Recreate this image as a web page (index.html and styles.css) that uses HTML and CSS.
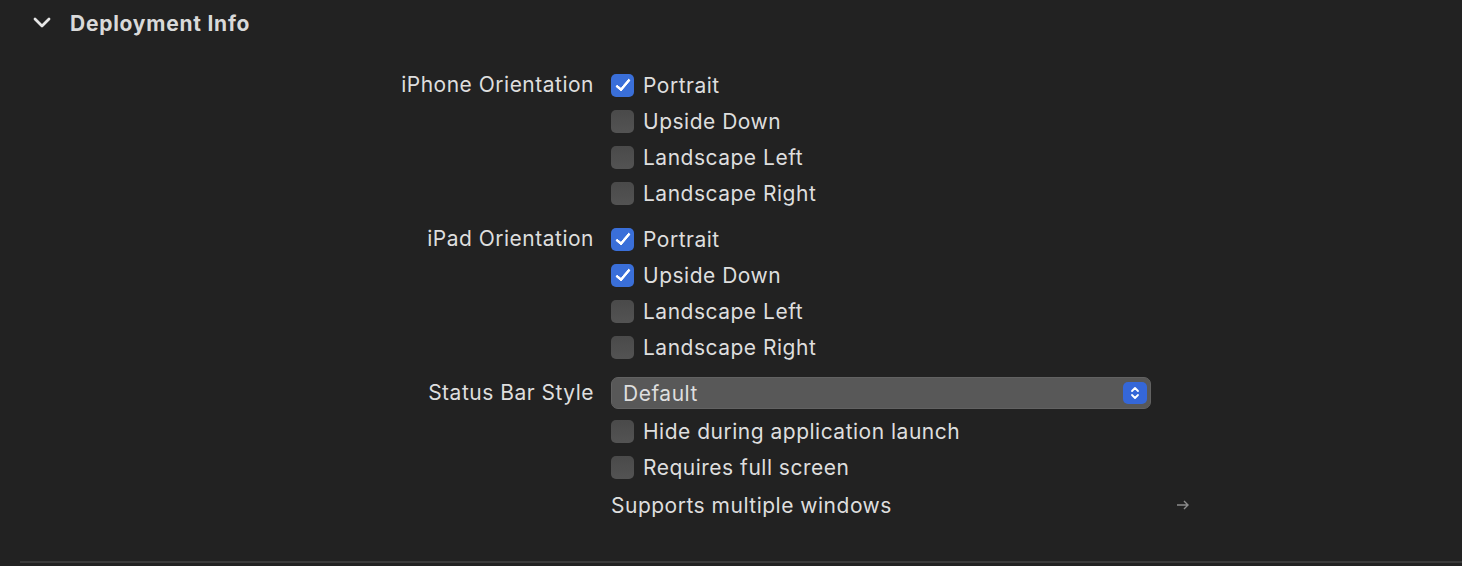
FILE: index.html
```html
<!DOCTYPE html>
<html lang="en">
<head>
  <meta charset="UTF-8">
  <title>Deployment Info</title>
  <link rel="stylesheet" href="styles.css">
</head>
<body>
  <div class="section">
    <div class="header">
      <svg class="chevron" width="18" height="12" viewBox="0 0 18 12"><path d="M2 2 L9 9 L16 2" fill="none" stroke="#e6e6e6" stroke-width="2.8" stroke-linecap="round" stroke-linejoin="round"/></svg>
      <span class="heading">Deployment Info</span>
    </div>

    <div class="group">
      <div class="label">iPhone Orientation</div>
      <div class="controls">
        <div class="row"><span class="box on"></span>Portrait</div>
        <div class="row"><span class="box"></span>Upside Down</div>
        <div class="row"><span class="box"></span>Landscape Left</div>
        <div class="row"><span class="box"></span>Landscape Right</div>
      </div>
    </div>

    <div class="group">
      <div class="label">iPad Orientation</div>
      <div class="controls">
        <div class="row"><span class="box on"></span>Portrait</div>
        <div class="row"><span class="box on"></span>Upside Down</div>
        <div class="row"><span class="box"></span>Landscape Left</div>
        <div class="row"><span class="box"></span>Landscape Right</div>
      </div>
    </div>

    <div class="group">
      <div class="label">Status Bar Style</div>
      <div class="controls">
        <div class="row">
          <div class="popup">
            <span>Default</span>
            <span class="stepper">
              <svg width="12" height="16" viewBox="0 0 12 16"><path d="M3 6 L6 3 L9 6 M3 10 L6 13 L9 10" fill="none" stroke="#fff" stroke-width="1.8" stroke-linecap="round" stroke-linejoin="round"/></svg>
            </span>
          </div>
        </div>
        <div class="row tight"><span class="box"></span>Hide during application launch</div>
        <div class="row"><span class="box"></span>Requires full screen</div>
        <div class="row tight wide">
          <span>Supports multiple windows</span>
          <svg class="arrow" width="14" height="12" viewBox="0 0 14 12"><path d="M1 6 H12 M8 2 L12 6 L8 10" fill="none" stroke="#8c8c8c" stroke-width="1.4"/></svg>
        </div>
      </div>
    </div>
  </div>
  <div class="divider"></div>
</body>
</html>
```

FILE: styles.css
```css
body {
  margin: 0; background: #222222; color: #dedede;
  font-family: Inter, "Noto Sans", sans-serif; font-size: 21px; letter-spacing: 0.5px;
  height: 566px; overflow: hidden; position: relative;
}
.section { height: 561px; }
.header { display: flex; align-items: center; height: 46px; }
.chevron { margin-left: 33px; margin-right: 19px; }
.heading { font-weight: 700; font-size: 21px; color: #d9d9d9; letter-spacing: 0.75px; }

.group { display: flex; margin-top: 10px; }
.header + .group { margin-top: 21px; }
.label { width: 594px; text-align: right; line-height: 36px; height: 36px; }
.controls { margin-left: 17px; }

.row { display: flex; align-items: center; height: 36px; }
.row.tight { margin-top: 2px; }
.row.wide { width: 580px; justify-content: space-between; }

.box {
  width: 23px; height: 23px; border-radius: 5px; margin-right: 9px;
  background: linear-gradient(#4a4a4a, #535353);
  box-sizing: border-box; flex-shrink: 0; position: relative;
}
.box.on { background: #3a6fd9; }
.box.on::after {
  content: ""; position: absolute; left: 8px; top: 2px;
  width: 5px; height: 12px;
  border-right: 3px solid #fff; border-bottom: 3px solid #fff;
  transform: rotate(40deg); border-radius: 1px;
}

.popup {
  width: 540px; height: 32px; box-sizing: border-box;
  background: #585858; border: 1px solid #626262; border-radius: 7px;
  display: flex; align-items: center; justify-content: space-between;
  padding: 0 3px 0 11px;
}
.stepper {
  width: 24px; height: 22px; border-radius: 5px; background: #3567d8;
  display: flex; align-items: center; justify-content: center;
}
.arrow { margin-right: 1px; }

.divider { position: absolute; left: 20px; right: 0; top: 561px; height: 2px; background: #3a3a3a; }
```
